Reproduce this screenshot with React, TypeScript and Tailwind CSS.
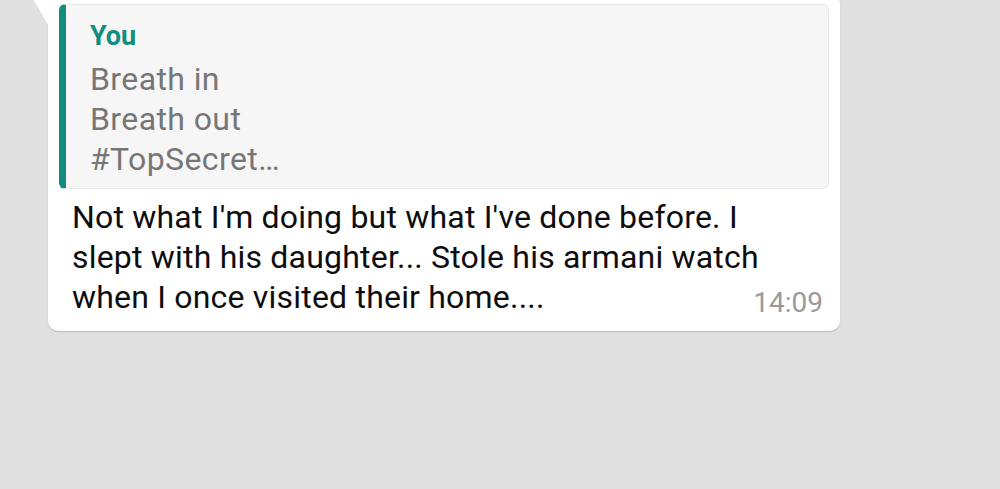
export default function App() {
  return (
    <div
      className="h-[489px] w-[1000px] overflow-hidden bg-[#e0e0e0]"
      style={{ fontFamily: 'Roboto, "Noto Sans", sans-serif' }}
    >
      <div className="relative -mt-[6px] ml-[48px] w-[792px] rounded-tr-[10px] rounded-b-[10px] bg-white pt-[10px] pr-[11px] pb-[13px] pl-[11px] shadow-[0_1px_1px_rgba(0,0,0,0.18)]">
        <svg
          className="absolute top-0 -left-[18px]"
          width="18"
          height="30"
          viewBox="0 0 18 30"
        >
          <polygon points="0,0 18,0 18,30 17,29" fill="#ffffff" />
        </svg>

        <div className="rounded-[6px] border border-l-[7px] border-[#e9e9e9] border-l-[#128c7e] bg-[#f6f6f6] pt-[10px] pb-[9px] pl-[24px]">
          <div className="text-[27px] leading-[42px] font-bold text-[#128c7e]">You</div>
          <div className="mt-[2px] text-[32px] leading-[40px] tracking-[0.4px] text-[#767676]">
            <div>Breath in</div>
            <div>Breath out</div>
            <div>#TopSecret…</div>
          </div>
        </div>

        <div className="mt-[8px] flow-root pr-[54px] pl-[13px] text-[32px] leading-[40px] tracking-[0.2px] text-[#0d0d0d]">
          Not what I'm doing but what I've done before. I slept with his daughter... Stole his
          armani watch when I once visited their home....
          <span className="float-right -mr-[48px] mt-[11px] text-[28px] leading-[30px] tracking-normal text-[#9a9a9a]">
            14:09
          </span>
        </div>
      </div>
    </div>
  )
}
